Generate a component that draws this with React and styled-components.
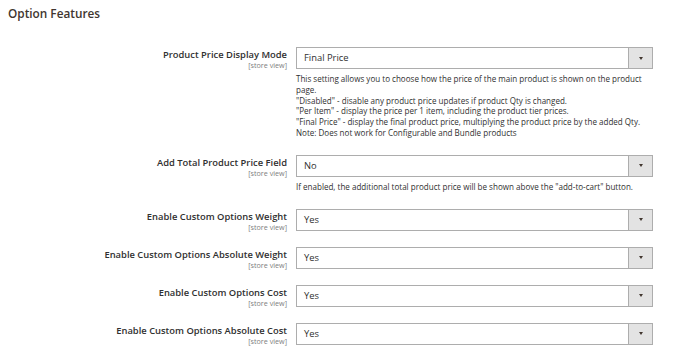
import React from "react";
import styled, { createGlobalStyle } from "styled-components";

const Global = createGlobalStyle`
  html, body { margin: 0; padding: 0; background: #fff; }
  body { font-family: "Open Sans", "Noto Sans", Arial, sans-serif; color: #303030; }
  * { box-sizing: border-box; }
`;

const Page = styled.div`
  padding: 6px 8px;
  width: 685px;
`;

const Title = styled.h2`
  margin: 0;
  font-size: 11.8px;
  line-height: 14px;
  font-weight: 600;
  color: #41362f;
`;

const Fieldset = styled.div`
  margin-top: 27px;
  display: flex;
  flex-direction: column;
  gap: 16px;
`;

const Row = styled.div`
  display: grid;
  grid-template-columns: 279px 357px;
  column-gap: 9px;
  align-items: start;
`;

const LabelCol = styled.div`
  text-align: right;
  padding-top: 2px;
  display: flex;
  flex-direction: column;
  align-items: flex-end;
`;

const Label = styled.span`
  font-size: 9.4px;
  line-height: 12px;
  font-weight: 600;
  color: #303030;
  white-space: nowrap;
`;

const Scope = styled.span`
  font-size: 7.2px;
  line-height: 8px;
  color: #808080;
`;

const Control = styled.div`
  display: flex;
  flex-direction: column;
`;

const Select = styled.div`
  height: 22px;
  border: 1px solid #adadad;
  background: #fff;
  display: flex;
  align-items: stretch;
`;

const Value = styled.span`
  flex: 1;
  padding-left: 7px;
  font-size: 9.4px;
  line-height: 20px;
  color: #303030;
`;

const ArrowBox = styled.span`
  width: 24px;
  background: #e3e3e3;
  border-left: 1px solid #adadad;
  display: flex;
  align-items: center;
  justify-content: center;
  &::after {
    content: "";
    border-left: 2.5px solid transparent;
    border-right: 2.5px solid transparent;
    border-top: 3px solid #41362f;
  }
`;

const Note = styled.div`
  margin-top: 5px;
  font-size: 8.05px;
  line-height: 10.8px;
  color: #303030;
`;

const fields = [
  {
    label: "Product Price Display Mode",
    value: "Final Price",
    note: [
      "This setting allows you to choose how the price of the main product is shown on the product page.",
      '"Disabled" - disable any product price updates if product Qty is changed.',
      '"Per Item" - display the price per 1 item, including the product tier prices.',
      '"Final Price" - display the final product price, multiplying the product price by the added Qty.',
      "Note: Does not work for Configurable and Bundle products",
    ],
  },
  {
    label: "Add Total Product Price Field",
    value: "No",
    note: ['If enabled, the additional total product price will be shown above the "add-to-cart" button.'],
  },
  { label: "Enable Custom Options Weight", value: "Yes" },
  { label: "Enable Custom Options Absolute Weight", value: "Yes" },
  { label: "Enable Custom Options Cost", value: "Yes" },
  { label: "Enable Custom Options Absolute Cost", value: "Yes" },
];

export default function App() {
  return (
    <Page>
      <Global />
      <Title>Option Features</Title>
      <Fieldset>
        {fields.map((f) => (
          <Row key={f.label}>
            <LabelCol>
              <Label>{f.label}</Label>
              <Scope>[store view]</Scope>
            </LabelCol>
            <Control>
              <Select>
                <Value>{f.value}</Value>
                <ArrowBox />
              </Select>
              {f.note && (
                <Note>
                  {f.note.map((l, i) => (
                    <div key={i}>{l}</div>
                  ))}
                </Note>
              )}
            </Control>
          </Row>
        ))}
      </Fieldset>
    </Page>
  );
}
